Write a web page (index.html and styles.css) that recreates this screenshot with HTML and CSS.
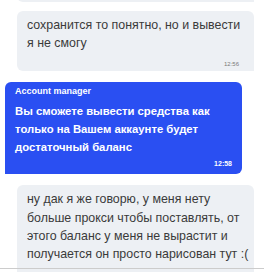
FILE: index.html
```html
<!DOCTYPE html>
<html>
<head>
<meta charset="utf-8">
<link rel="stylesheet" href="styles.css">
</head>
<body>
<div class="chat">
  <div class="msg mine prev"></div>
  <div class="msg mine">
    <div class="text">сохранится то понятно, но и вывести<br>я не смогу</div>
    <div class="time">12:56</div>
  </div>
  <div class="msg theirs">
    <div class="author">Account manager</div>
    <div class="text">Вы сможете вывести средства как<br>только на Вашем аккаунте будет<br>достаточный баланс</div>
    <div class="time">12:58</div>
  </div>
  <div class="msg mine">
    <div class="text">ну дак я же говорю, у меня нету<br>больше прокси чтобы поставлять, от<br>этого баланс у меня не вырастит и<br>получается он просто нарисован тут :(</div>
    <div class="time">12:58</div>
  </div>
</div>
<div class="divider"></div>
</body>
</html>
```

FILE: styles.css
```css
html, body {
  margin: 0;
  padding: 0;
  background: #ffffff;
}
body {
  position: relative;
  width: 264px;
  height: 272px;
  overflow: hidden;
  font-family: "Liberation Sans", Arial, sans-serif;
}
.chat {
  height: 272px;
  overflow: hidden;
  display: flex;
  flex-direction: column;
  gap: 11px;
}
.msg {
  box-sizing: border-box;
  flex: none;
  border-radius: 6px;
}
.mine {
  background: #edf0f4;
  margin-left: 17px;
  width: 237px;
  border-bottom-right-radius: 0;
  padding: 5px 15px 3px 10px;
  color: #3a3a3a;
}
.prev {
  height: 40px;
  margin-top: -38px;
  margin-bottom: -2px;
}
.theirs {
  background: #2a4ff2;
  margin-left: 5px;
  width: 237px;
  border-bottom-left-radius: 0;
  padding: 4px 10px 6px 10px;
  color: #ffffff;
}
.text {
  font-size: 12.4px;
  line-height: 18.3px;
  white-space: nowrap;
}
.theirs .text {
  font-weight: bold;
  font-size: 11.3px;
  margin-top: 5px;
}
.author {
  font-size: 9px;
  line-height: 11px;
  font-weight: bold;
}
.time {
  font-size: 6px;
  line-height: 8px;
  text-align: right;
  color: #7a7a7a;
  margin-top: 7px;
}
.theirs .time {
  color: #ffffff;
  font-weight: bold;
  font-size: 7px;
  margin-top: 4px;
}
.divider {
  position: absolute;
  left: 0;
  top: 268px;
  width: 264px;
  height: 1px;
  background: #cccccc;
}
```
